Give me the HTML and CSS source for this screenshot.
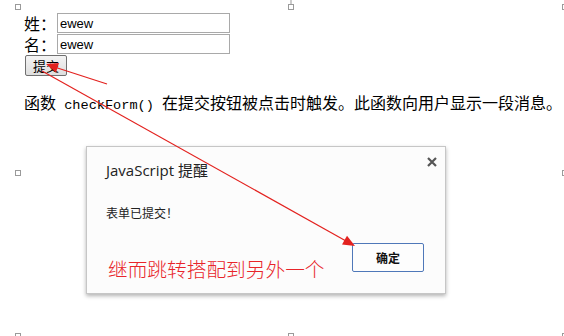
FILE: index.html
```html
<!DOCTYPE html>
<html lang="zh-CN">
<head>
  <meta charset="UTF-8">
  <meta name="viewport" content="width=device-width, initial-scale=1.0">
  <title>checkForm 提醒</title>
  <link rel="stylesheet" href="styles.css">
</head>
<body>
  <div class="page">
    <form class="form" action="#">
      <div class="row">
        <label class="lbl" for="fname">姓：</label>
        <input class="txt" id="fname" type="text" value="ewew">
      </div>
      <div class="row">
        <label class="lbl" for="lname">名：</label>
        <input class="txt" id="lname" type="text" value="ewew">
      </div>
      <button class="btn" type="button">提交</button>
    </form>

    <p class="desc">函数<span class="code"> checkForm() </span>在提交按钮被点击时触发。此函数向用户显示一段消息。</p>

    <!-- 알림창 -->
    <div class="alert">
      <div class="alert_head">
        <span class="alert_title">JavaScript 提醒</span>
        <svg class="alert_close" width="10" height="10" viewBox="0 0 10 10">
          <path d="M1 1 L9 9 M9 1 L1 9" stroke="#555" stroke-width="2.2"/>
        </svg>
      </div>
      <div class="alert_msg">表单已提交！</div>
      <div class="alert_foot">
        <span class="note">继而跳转搭配到另外一个</span>
        <button class="ok" type="button">确定</button>
      </div>
    </div>

    <!-- 빨간 화살표 -->
    <svg class="marks" width="564" height="336" viewBox="0 0 564 336">
      <line x1="107" y1="84" x2="56" y2="67.5" stroke="#e3221f" stroke-width="1.2"/>
      <polygon points="46,64 59,63 56,72.5" fill="#e3221f"/>
      <line x1="42" y1="71" x2="346" y2="241" stroke="#e3221f" stroke-width="1.2"/>
      <polygon points="355,246 342,244.5 347,235.7" fill="#e3221f"/>
      <line x1="291" y1="0" x2="291" y2="4" stroke="#999" stroke-width="1"/>
    </svg>

    <!-- 선택 핸들 -->
    <i class="hd h1"></i><i class="hd h2"></i><i class="hd h3"></i>
    <i class="hd h4"></i><i class="hd h5"></i>
    <i class="hd h6"></i><i class="hd h7"></i><i class="hd h8"></i>
  </div>
</body>
</html>
```

FILE: styles.css
```css
html, body{margin: 0;padding: 0;background: #fff;}
body{
  font-family: "Noto Sans CJK SC", "Liberation Sans", sans-serif;
  color: #000;
}
.page{
  position: relative;
  width: 564px;height: 336px;
  overflow: hidden;
  box-sizing: border-box;
  padding: 13px 0 0 24px;
}

/* 폼 */
.form{margin: 0;}
.row{
  display: flex;
  align-items: center;
  height: 20px;
  margin-bottom: 1px;
}
.lbl{
  width: 33px;
  font-size: 16px;line-height: 20px;
}
.txt{
  box-sizing: border-box;
  width: 173px;height: 20px;
  margin: 0;padding: 0 2px;
  border: 1px solid #a9a9a9;
  font-family: "Liberation Sans", Arial, sans-serif;
  font-size: 13px;
  color: #000;
}
.btn{
  display: block;
  box-sizing: border-box;
  width: 42px;height: 21px;
  margin: 1px 0 0 1px;padding: 0;
  border: 1px solid #707070;
  border-radius: 2px;
  background: linear-gradient(#f4f4f4, #dedede);
  font-family: "Noto Sans CJK SC", sans-serif;
  font-size: 13px;line-height: 18px;
  color: #000;
}

.desc{
  margin: 16px 0 0 0;
  font-size: 16px;line-height: 20px;
  white-space: nowrap;
}
.desc .code{
  font-family: "Liberation Mono", monospace;
  font-size: 13.6px;
  white-space: pre;
}

/* 알림창 */
.alert{
  box-sizing: border-box;
  width: 360px;height: 148px;
  margin: 30px 0 0 62px;
  padding: 12px 21px 0 19px;
  background: #fcfcfc;
  border: 1px solid #c6c6c6;
  box-shadow: 0 2px 4px rgba(0,0,0,.3);
}
.alert_head{
  display: flex;
  justify-content: space-between;
  align-items: flex-start;
}
.alert_title{
  font-family: "Open Sans", "Noto Sans CJK SC", sans-serif;
  font-size: 15px;line-height: 22px;
  color: #222;
}
.alert_close{
  margin: -2px -13px 0 0;
}
.alert_msg{
  margin-top: 23px;
  font-size: 12px;line-height: 18px;
  color: #222;
}
.alert_foot{
  display: flex;
  justify-content: space-between;
  align-items: flex-start;
  margin-top: 21px;
}
.note{
  margin: 14px 0 0 2px;
  font-size: 19.7px;line-height: 24px;
  color: #e8252a;
  font-weight: 300;
}
.ok{
  box-sizing: border-box;
  width: 72px;height: 29px;
  margin: 0;padding: 0;
  border: 1px solid #4f78b9;
  border-radius: 2px;
  background: #fdfdfd;
  font-family: "Noto Sans CJK SC", sans-serif;
  font-size: 12px;font-weight: bold;
  color: #111;
}

.marks{
  position: absolute;
  left: 0;top: 0;
  pointer-events: none;
}

/* 핸들 */
.hd{
  position: absolute;
  box-sizing: border-box;
  width: 6px;height: 6px;
  border: 1px solid #9a9a9a;
  background: #fff;
}
.h1{left: 15px;top: 4px;}
.h2{left: 288px;top: 4px;}
.h3{left: 562px;top: 4px;}
.h4{left: 15px;top: 170px;}
.h5{left: 562px;top: 170px;}
.h6{left: 15px;top: 333px;}
.h7{left: 288px;top: 333px;}
.h8{left: 562px;top: 333px;}
```
